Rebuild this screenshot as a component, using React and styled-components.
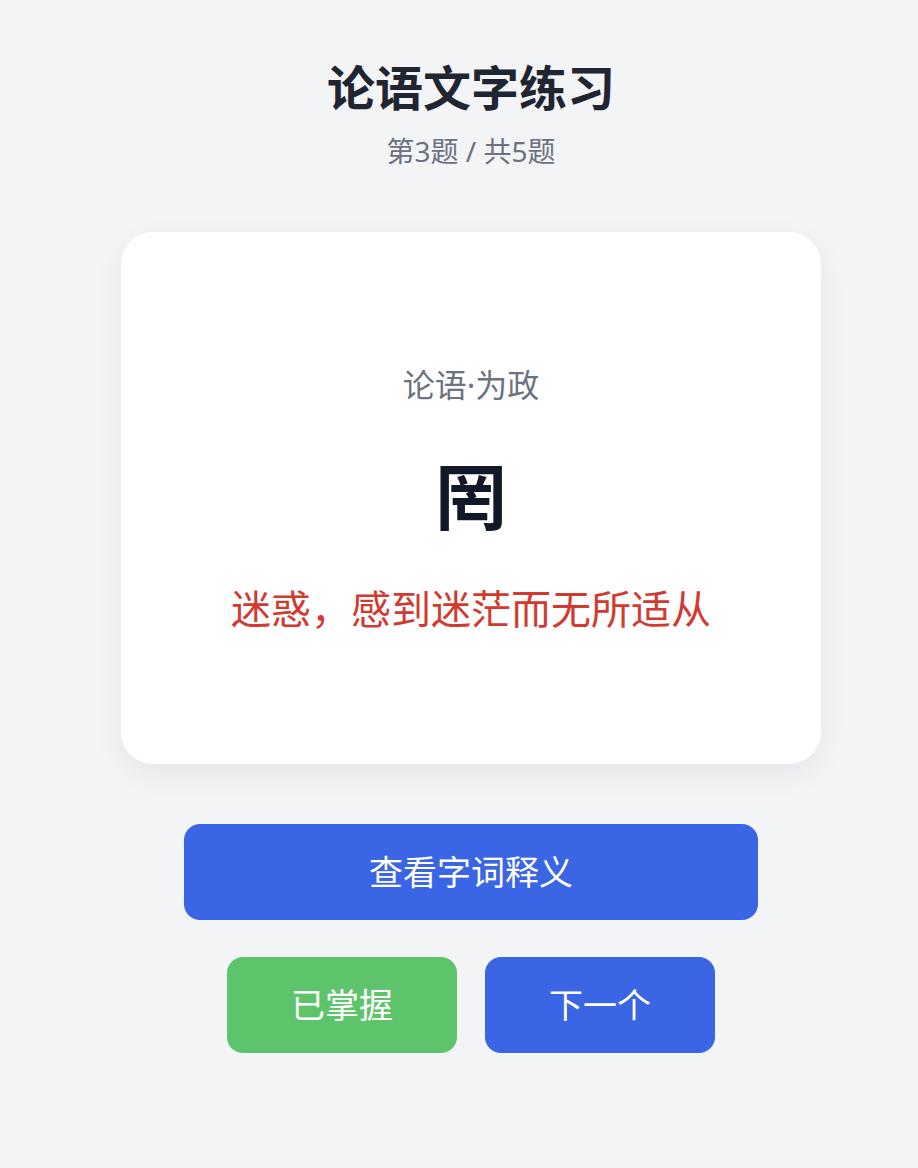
import React from "react";
import styled, { createGlobalStyle } from "styled-components";

const GlobalStyle = createGlobalStyle`
  html, body {
    margin: 0;
    padding: 0;
    background: #f3f4f6;
  }
  body {
    font-family: "Noto Sans", "Noto Sans CJK SC", sans-serif;
  }
`;

const Page = styled.main`
  min-height: 1168px;
  box-sizing: border-box;
  padding: 59px 0 0 24px;
  display: flex;
  flex-direction: column;
  align-items: center;
`;

const Title = styled.h1`
  margin: 0;
  font-size: 48px;
  line-height: 58px;
  font-weight: 700;
  color: #1f2531;
`;

const Progress = styled.p`
  margin: 13px 0 0;
  font-size: 28px;
  line-height: 42px;
  color: #6b7280;
`;

const Card = styled.section`
  margin-top: 60px;
  width: 700px;
  height: 532px;
  box-sizing: border-box;
  background: #ffffff;
  border-radius: 32px;
  box-shadow: 0 10px 30px rgba(17, 24, 39, 0.06);
  display: flex;
  flex-direction: column;
  align-items: center;
  justify-content: center;
  padding-top: 4px;
`;

const Source = styled.div`
  font-size: 32px;
  line-height: 48px;
  color: #6b7280;
`;

const Character = styled.div`
  margin-top: 33px;
  font-size: 72px;
  line-height: 108px;
  font-weight: 700;
  color: #111827;
`;

const Meaning = styled.div`
  margin-top: 29px;
  font-size: 40px;
  line-height: 60px;
  color: #d23a30;
`;

const Actions = styled.div`
  margin-top: 60px;
  display: flex;
  flex-direction: column;
  align-items: center;
  gap: 37px;
`;

const Row = styled.div`
  display: flex;
  gap: 28px;
`;

const Button = styled.button`
  width: ${(p) => (p.$wide ? "574px" : "230px")};
  height: 96px;
  border: none;
  border-radius: 16px;
  background: ${(p) => (p.$tone === "green" ? "#5ec46b" : "#3a65e4")};
  color: #ffffff;
  font-family: "Noto Sans", "Noto Sans CJK SC", sans-serif;
  font-size: 34px;
  line-height: 1;
  cursor: pointer;
  display: flex;
  align-items: center;
  justify-content: center;
  padding: 0;
`;

export default function App() {
  return (
    <>
      <GlobalStyle />
      <Page>
        <Title>论语文字练习</Title>
        <Progress>第3题 / 共5题</Progress>
        <Card>
          <Source>论语·为政</Source>
          <Character>罔</Character>
          <Meaning>迷惑，感到迷茫而无所适从</Meaning>
        </Card>
        <Actions>
          <Button $wide>查看字词释义</Button>
          <Row>
            <Button $tone="green">已掌握</Button>
            <Button>下一个</Button>
          </Row>
        </Actions>
      </Page>
    </>
  );
}
